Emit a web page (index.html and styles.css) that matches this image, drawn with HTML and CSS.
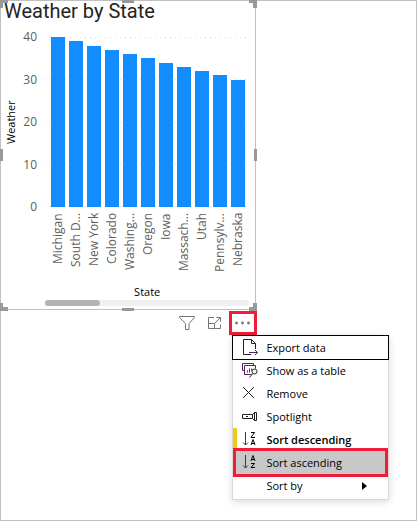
FILE: index.html
```
<!DOCTYPE html>
<html lang="en">
<head>
<meta charset="utf-8">
<title>Weather by State</title>
<link rel="stylesheet" href="styles.css">
</head>
<body>
<main class="canvas">
  <div class="tile">
    <section class="visual">
      <span class="handle corner top left"></span>
      <span class="handle edge-x top"></span>
      <span class="handle corner top right"></span>
      <span class="handle edge-y left"></span>
      <span class="handle edge-y right"></span>
      <span class="handle corner bottom left"></span>
      <span class="handle edge-x bottom"></span>
      <span class="handle corner bottom right"></span>
      <h1 class="title">Weather by State</h1>
      <div class="chart">
        <div class="axis-title-y">Weather</div>
        <div class="ticks"><span>40</span><span>30</span><span>20</span><span>10</span><span>0</span></div>
        <div class="plot">
          <div class="grid-lines"><i></i><i></i><i></i><i></i><i></i></div>
          <div class="bars">
            <div class="bar" style="height:100%"></div>
            <div class="bar" style="height:97.5%"></div>
            <div class="bar" style="height:95%"></div>
            <div class="bar" style="height:92.5%"></div>
            <div class="bar" style="height:90%"></div>
            <div class="bar" style="height:87.5%"></div>
            <div class="bar" style="height:85%"></div>
            <div class="bar" style="height:82.5%"></div>
            <div class="bar" style="height:80%"></div>
            <div class="bar" style="height:77.5%"></div>
            <div class="bar" style="height:75%"></div>
          </div>
        </div>
        <div class="labels">
          <span>Michigan</span><span>South D...</span><span>New York</span><span>Colorado</span><span>Washing...</span><span>Oregon</span><span>Iowa</span><span>Massach...</span><span>Utah</span><span>Pennsylv...</span><span>Nebraska</span>
        </div>
        <div class="axis-title-x">State</div>
        <div class="scroll"><div class="thumb"></div></div>
      </div>
    </section>
    <div class="toolbar">
      <button class="tool" aria-label="Filters"><svg width="16" height="16" viewBox="0 0 16 16"><path d="M.5 1.5h15v1L10 8.500v6H6.500v-6L.5 2.500z"/></svg></button>
      <button class="tool" aria-label="Focus mode"><svg width="16" height="16" viewBox="0 0 16 16"><path d="M7 2.500H1.500v11h12V9.500M1.500 8.500h6v5M7.500 8.500l6-6M9.500 2.500h4v4"/></svg></button>
      <button class="tool more" aria-label="More options"><svg width="16" height="16" viewBox="0 0 16 16"><g class="dots"><circle cx="1.500" cy="8" r="1.400"/><circle cx="7.500" cy="8" r="1.400"/><circle cx="13.500" cy="8" r="1.400"/></g></svg></button>
      <div class="menu">
        <button class="item focused"><svg width="18" height="18" viewBox="0 0 18 18"><path d="M9 15.500H1.500V.5h8l4 4V10M9.500.5v4h4"/><path class="purple" d="M7 13.500h8.500M13 11l2.500 2.500L13 16"/></svg>Export data</button>
        <button class="item"><svg width="18" height="18" viewBox="0 0 18 18"><path class="purple" d="M2.500 8.500H.5v-7h11v2M9.500 12.500h-7v-9h11v3M5.500 10.500v-2M7.500 10.500v-4M9.500 8.500v-2"/><circle cx="12.500" cy="9.500" r="2.500"/><path d="M10.800 11.500L7.500 15.500"/></svg>Show as a table</button>
        <button class="item"><svg width="18" height="18" viewBox="0 0 18 18"><path d="M1 2l11 11M12 2L1 13"/></svg>Remove</button>
        <button class="item"><svg width="18" height="18" viewBox="0 0 18 18"><path d="M10.500 10.500H.5v-4h10M10.500 10.500v-4l2-2v8zM12.500 4.500h2v8h-2M4 8.500h2"/></svg>Spotlight</button>
        <button class="item current"><svg width="18" height="18" viewBox="0 0 18 18"><path class="purple" d="M3.500 1v13M1 11.500L3.500 14 6 11.500"/><path class="letters" d="M9 1.500h3.500L9 6.500h4M9 14l2-5.500L13 14M9.500 12.500h3"/></svg>Sort descending</button>
        <button class="item marked"><svg width="18" height="18" viewBox="0 0 18 18"><path class="purple" d="M3.500 1v13M1 11.500L3.500 14 6 11.500"/><path class="letters" d="M9 7l2-5.500L13 7M9.500 5.500h3M9 9.500h3.500L9 13.500h4"/></svg>Sort ascending</button>
        <button class="item"><span class="blank"></span>Sort by<span class="arrow"></span></button>
      </div>
    </div>
  </div>
</main>
</body>
</html>
```
FILE: styles.css
```
* { box-sizing: border-box; }
body {
  margin: 0;
  background: #fff;
  font-family: "Open Sans", "Noto Sans", sans-serif;
  font-size: 12px;
  color: #252423;
}
.canvas {
  min-height: 100vh;
  display: grid;
  grid-template-columns: 8fr 5fr;
  border: 1px solid #c0c0c0;
}
.visual {
  position: relative;
  border-right: 1px solid #c0c0c0;
  border-bottom: 1px solid #c0c0c0;
  padding-bottom: 3px;
}
.handle { position: absolute; background: #999; }
.corner { width: 8px; height: 8px; background: none; border: 0 solid #999; }
.corner.top { border-top-width: 3px; }
.corner.bottom { border-bottom-width: 4px; }
.corner.left { border-left-width: 3px; }
.corner.right { border-right-width: 4px; }
.top { top: -1px; }
.bottom { bottom: -2px; }
.left { left: -1px; }
.right { right: -2px; }
.edge-x { left: calc(50% - 6px); width: 12px; height: 3px; }
.edge-y { top: calc(50% - 6px); width: 3px; height: 12px; }
.title {
  margin: 0;
  padding: 0 0 2px 3px;
  font: 400 20px/20px Roboto, sans-serif;
}
.chart {
  display: grid;
  grid-template-columns: 20px 16px 1fr;
  grid-template-rows: 170px 79px 14px 6px;
  padding: 14px 6px 0 0;
}
.axis-title-y {
  writing-mode: vertical-rl;
  transform: rotate(180deg);
  text-align: center;
  line-height: 20px;
  font-size: 11px;
  color: #000;
}
.ticks {
  display: flex;
  flex-direction: column;
  justify-content: space-between;
  margin: -8px 0;
  text-align: right;
  line-height: 16px;
  color: #605e5c;
}
.plot { position: relative; margin-left: 8px; }
.grid-lines {
  position: absolute;
  inset: 0;
  display: flex;
  flex-direction: column;
  justify-content: space-between;
}
.grid-lines i {
  height: 1px;
  background: repeating-linear-gradient(90deg, #ddd 0 1px, transparent 1px 5px);
}
.bars, .labels {
  display: grid;
  grid-template-columns: repeat(11, 1fr);
  padding: 0 2px 0 4px;
}
.bars { position: relative; height: 100%; align-items: end; }
.bar { margin: 0 2px; background: #118dff; }
.labels {
  grid-column: 3;
  margin-left: 8px;
  padding-top: 6px;
  color: #605e5c;
}
.labels span {
  writing-mode: vertical-rl;
  transform: rotate(180deg);
  text-align: right;
  line-height: 17px;
  white-space: nowrap;
}
.axis-title-x {
  grid-column: 3;
  margin-left: 8px;
  text-align: center;
  line-height: 12px;
  font-size: 11px;
  color: #000;
}
.scroll {
  grid-column: 3;
  margin-left: 8px;
  border-radius: 3px;
  background: #f0f0f0;
}
.thumb { width: 27%; height: 6px; border-radius: 3px; background: #b3b3b3; }
.toolbar {
  position: relative;
  display: flex;
  justify-content: flex-end;
  align-items: center;
  gap: 12px;
  padding-top: 1px;
}
.tool { padding: 0; border: 0; background: none; line-height: 0; }
.tool svg { fill: none; stroke: #77737a; }
.tool .dots { fill: #77737a; stroke: none; }
.more { padding: 1px 3px; height: 24px; width: 28px; border: 3px solid #f01c39; margin: 0 -1px 0 -6px; }
.menu {
  position: absolute;
  top: 100%;
  left: calc(100% - 24px);
  width: 157px;
  padding-bottom: 2px;
  border: 1px solid #d8d8d8;
  background: #fff;
  box-shadow: 0 2px 8px rgba(0, 0, 0, .15);
}
.item {
  display: flex;
  align-items: center;
  gap: 6px;
  width: 100%;
  height: 23px;
  padding: 0 0 0 9px;
  border: 0;
  background: none;
  color: #000;
  font: inherit;
  font-size: 11px;
  white-space: nowrap;
}
.item svg { fill: none; stroke: #222; flex: none; }
.item .purple { stroke: #5c2066; }
.item .letters { stroke: #000; }
.blank { width: 18px; }
.focused { outline: 1px solid #000; }
.current { border-left: 4px solid #f2c811; padding-left: 5px; font-weight: 600; }
.marked {
  position: relative;
  height: 29px;
  margin: -3px 0;
  padding-left: 6px;
  border: 3px solid #f01c39;
  background: #c8c8c8;
}
.arrow {
  margin-left: 53px;
  border: 4px solid transparent;
  border-left: 5px solid #000;
  border-right: 0;
}
```
